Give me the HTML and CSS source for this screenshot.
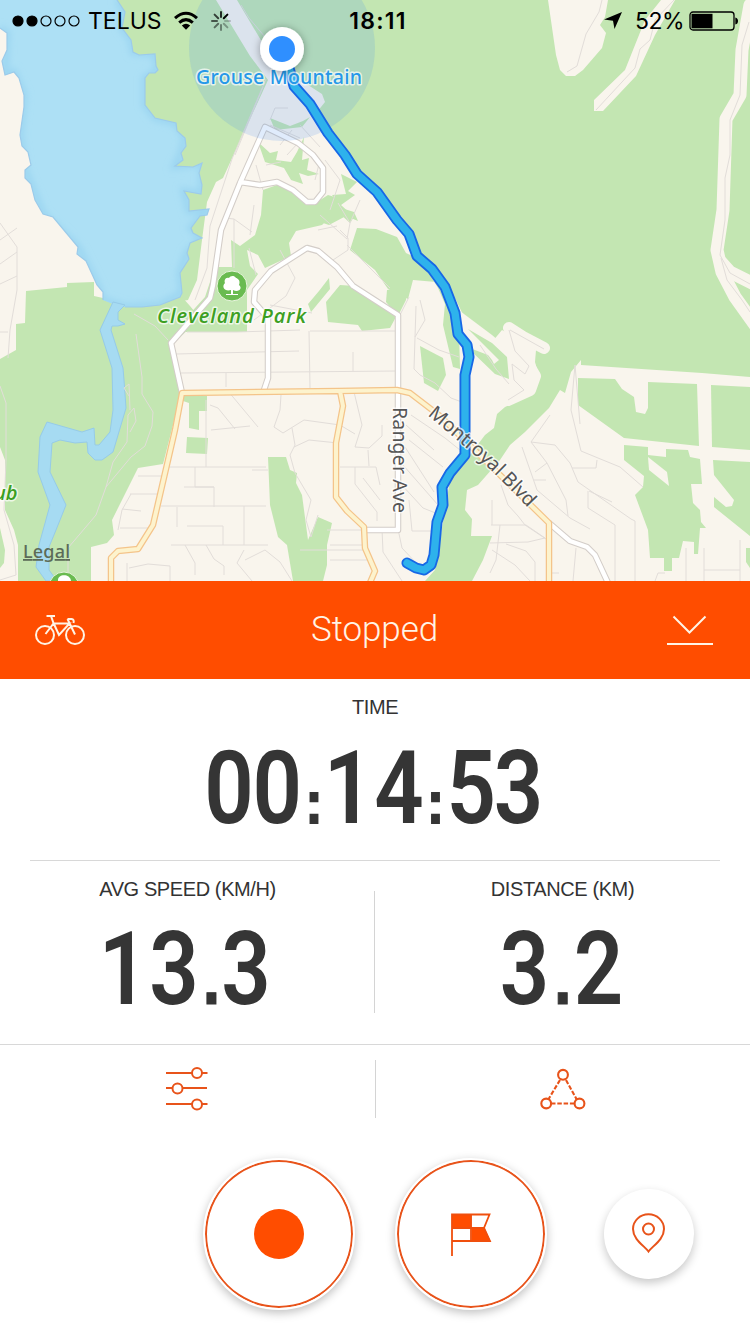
FILE: index.html
```html
<!DOCTYPE html>
<html lang="en">
<head>
<meta charset="utf-8">
<title>Ride recording</title>
<link rel="stylesheet" href="styles.css">
</head>
<body>
<main class="screen">
  <section class="map">
    <svg class="map-art" viewBox="0 0 750 581" width="750" height="581">
      <defs>
        <filter id="soft" x="-5%" y="-5%" width="110%" height="110%"><feGaussianBlur stdDeviation="3"/></filter>
        <filter id="drop" x="-50%" y="-50%" width="200%" height="200%"><feDropShadow dx="0" dy="1" stdDeviation="4" flood-opacity=".35"/></filter>
        <clipPath id="lakeClip"><path d="M0 0H117L125 12 122 28 131 40 133 52 139 55 155 54 156 66 158 70 155 73 149 73 145 78V105L155 118 176 123 177 131 185 138 186 146 181 153 183 160 175 166 193 167 202 163 199 173 202 185 201 194 184 191 189 200V211L209 209 207 215 200 216 191 228 193 233 202 238 190 243 187 253 189 259 180 273 182 293 180 297 160 305 142 307 125 307 113 304 103 300V292L97 285 86 261 77 254 78 247 53 217 43 214 35 200 31 184 25 178V170L31 165 28 152 22 146 20 135 24 107V95L19 78 14 72 5 75 2 61 7 50V33L0 28Z"/></clipPath>
      </defs>
      <rect class="land" width="750" height="581"/>

      <!-- parks and forest -->
      <g class="green">
        <path d="M110 0H216L250 56 268 80 245 130 223 178 216 182 207 202 202 240 197 280 188 300 130 310Z"/>
        <path d="M237 0H750V377L702 373 581 365V360L571 372 565 393 560 390 549 408 525 432 510 445 500 460 478 485 467 490 465 510 472 519 471 536 492 536 483 560 472 581H425L435 570 440 540 450 480 470 455 485 435 494 428 497 414 505 407 527 397 539 376 535 362 536 350 502 330 492 342 468 325 456 300 440 272 418 250 408 228 396 210 370 184 352 163 342 145 325 122 317 112 325 102 322 94 308 85 290 78 262 42Z"/>
        <path d="M26 291 67 287V283L94 282V296L103 298 113 304 142 307 182 297 190 306 200 318 172 345 182 390 163 464 138 468 112 520 114 535 107 543 91 547V581H18V545L14 530 5 510V460L0 447V359L16 350V324L25 323Z"/>
        <path d="M0 528 5 550 4 563 0 568Z"/>
        <path d="M263 190 277 185 290 190 306 205 317 202 328 195 338 198 335 212 322 225 296 231 289 243 291 256 265 268 258 255 247 250 250 266 258 274 247 290 247 332H186V318L205 297 215 267 232 267 231 240 240 246 255 235 261 215Z"/>
        <path d="M258 142 270 153 278 151 276 160 291 162 297 152 304 137 302 160 309 158 307 170 319 174 308 176 299 173 303 184 291 180 284 168 265 162Z"/>
        <path d="M270 118 290 126 303 121 310 117 302 127 275 130Z"/>
        <path d="M341 174 357 182 348 191 355 195 341 205 354 217 350 223 338 212 328 218 337 201 332 195 346 194Z"/>
        <path d="M335 206 354 212 358 221 346 216 329 225 317 221Z"/>
        <path d="M357 228 376 229 397 237 406 253 421 260 438 288 445 304 443 325 453 367 460 369 459 330 450 309 436 282 413 280 408 299 388 289 375 270 350 250Z"/>
        <path d="M326 302 340 285 355 286 370 297 397 315 390 328 362 331 358 325 328 322Z"/>
        <path d="M387 290 407 288 406 300 398 316 386 302Z"/>
        <path d="M308 304 319 291 329 278 330 289 311 312Z"/>
        <path d="M420 346 443 358 446 375 438 391 424 383Z"/>
        <path d="M268 457H286L290 470 297 473 296 483 302 495 308 540 318 517 332 523 327 545V565L323 581H293L287 545 278 537 270 505Z"/>
        <path d="M183 396H207V411H199V430L189 428V403L183 401Z"/>
        <path d="M187 437 208 438 207 454 186 453Z"/>
        <path d="M578 378 615 379 622 389 634 397 636 412 645 414 648 408V382L697 384 699 446 624 438 578 405Z"/>
        <path d="M711 385 750 387V450L712 447Z"/>
        <path d="M624 445 648 447V455L666 457V449L688 450 690 457 700 459 702 484H691L693 503 700 510 701 522 706 528H700L698 554H694V542L683 541 679 558H672V571H664V558H650L648 530 635 495 643 487 644 476 624 460Z"/>
        <path d="M713 460 750 462V536L714 507V497L726 507 732 506 734 500 714 475Z"/>
        <path d="M746 548H750V568L746 562Z"/>
      </g>
      <g class="clearing">
        <path d="M548 0H608L605 17 600 25 606 33 602 48 583 70 575 76H566L560 70 556 55Z"/>
        <path d="M661 0 645 20 625 70 594 100V111H603L636 76 655 35 675 0Z"/>
        <path d="M648 457 667 472 669 486 649 470Z"/>
        <path d="M460 311 492 335 514 354 511 378 490 374 463 355Z"/>
      </g>
      <g class="strip">
        <path d="M750 5 742 50 740 95 726 119 723 210 717 250 722 272 735 297 755 325"/>
        <path d="M721 262 730 272 754 284"/>
        <path d="M490 343 512 366M509 328 519 349 535 376 530 390 508 400M509 328 523 337 544 348" stroke-width="12"/>
        <path d="M467 350 490 363" stroke-width="9"/>
      </g>
      <path class="green" d="M468 329 492 343 507 357 509 379 495 374 467 347 488 355 492 360 494 364 499 360Z"/>

      <!-- lake and river -->
      <g clip-path="url(#lakeClip)">
        <rect class="water" width="220" height="320"/>
        <path class="lake-edge" filter="url(#soft)" d="M117 0 125 12 122 28 131 40 133 52 155 54 158 70 145 78V105L155 118 176 123 185 138 181 153 175 166 202 163 202 194 184 191 189 211 209 209 191 228 202 238 187 253 180 273 182 293 160 305 125 307 103 300 97 285 78 247 43 214 25 170 20 135 24 95 14 72 5 75 7 33 0 28"/>
      </g>
      <path class="shore" d="M117 0 125 12 122 28 131 40 133 52 139 55 155 54 156 66 158 70 155 73 149 73 145 78V105L155 118 176 123 177 131 185 138 186 146 181 153 183 160 175 166 193 167 202 163 199 173 202 185 201 194 184 191 189 200V211L209 209 207 215 200 216 191 228 193 233 202 238 190 243 187 253 189 259 180 273 182 293 180 297 160 305 142 307 125 307M103 300V292L97 285 86 261 77 254 78 247 53 217 43 214 35 200 31 184 25 178V170L31 165 28 152 22 146 20 135 24 107V95L19 78 14 72 5 75 2 61 7 50V33L0 28"/>
      <path class="river" d="M113 302 100 330 112 368 113 410 110 432 99 445H95L94 428 82 432 47 422 40 437 38 472 50 505 39 545 36 567 46 581H57L49 570V547L56 530 66 505 50 472 52 443 60 440 75 443 87 442 88 453 95 460H102L113 452 126 408 124 380 123 368 111 330 112 326H118L125 324 118 320V312L125 305Z"/>

      <!-- minor streets -->
      <g class="minor">
        <path d="M0 223 17 247V290L10 330 8 358M0 240 17 228M0 264 17 252M0 284 17 276M0 332 8 332"/>
        <path d="M0 386 6 403V460L4 510 14 545 16 575 0 580M134 314 155 326 168 340M136 334 142 377V394L153 412 152 426 145 446 131 457 106 487 96 515 68 548V581M106 487 113 462 127 442 128 415 134 408 136 421 130 432M129 396 124 388 129 384 130 410"/>
        <path d="M176 354 299 351M310 331H396M181 373 396 371M226 373V387M309 331 310 388M353 352V371M187 332 237 332 300 330"/>
        <path d="M211 430 250 426M206 400V467M165 467H266M161 506H266M228 391 258 427M210 405 218 408 235 429M195 467V487H214V507M184 487H214M177 507V527M120 528H150M187 526H223V545M171 545H268M244 506V545M130 494H157M122 509 141 511M118 530 122 510 131 494M138 476H163M185 545 195 563V575M206 545 214 559 224 566V575M127 563V581M129 568 148 564 170 566V581M244 550 237 563 252 581M252 470H268M281 395 280 410 274 427 283 433 304 420 340 425 355 434M292 428 295 445 290 455 295 473 311 500 306 520 311 537 318 515M294 447 309 440 338 443M354 392 362 425 355 447 369 448 382 436V425M368 450 369 466M340 467H376L380 485M355 467V484L377 512V521M363 478 370 487 380 500M300 550H368M330 560H371M330 545H366M327 530H362M245 560 265 550 280 562 292 581"/>
        <path d="M416 306 414 369 420 375 435 383 451 398 470 405M417 338 439 350 459 357M406 425 434 450M411 415 445 438 470 458M409 440 443 467M405 447 434 492M403 465 438 505M400 483 423 508 438 514M382 529 383 552 402 581M398 529 402 548 418 565M409 500 412 531H438"/>
        <path d="M550 415 531 442 555 445 570 463 578 482 631 519 635 521V581M531 442 547 463 566 500 568 516M522 447 537 490 570 518 590 529M535 472 547 463M534 480H546M572 468H596L597 460M580 424 575 365 571 410 581 451 598 458 620 467 643 487M589 491 612 502M588 491V508L615 525V581M501 485 508 505 518 516 525 525 546 539M491 525H526L545 538 528 542 490 543M492 525 492 500M500 525 496 560 490 573M506 544 526 551 535 562V581M492 550 515 565 530 581M576 548 573 581M655 581 658 573H665M704 548V581M686 548V581M740 540V581M704 570H740M549 573H559"/>
        <path d="M509 330 515 351 529 366 525 374 512 364 514 380 524 390 508 400M510 330 544 349M480 345 496 369 509 384"/>
        <path d="M602 0 599 12 586 34 577 66 567 72M674 0 655 20 650 40 640 49 635 68 596 110M749 22 742 45 740 95 730 120V155L725 178V220L720 255 730 273 750 284M721 258 727 280 742 300 750 312"/>
        <path d="M241 5 249 18 265 37M266 79 232 159 210 226 207 268 195 300M263 87 235 155M225 218 234 219V268M234 219 252 232M270 125 300 138M298 143 287 155M320 160 315 180M338 203 350 223 347 239 320 215M350 223 360 200M347 245 390 288M280 250 295 278 286 296 254 320M330 210 340 180 325 160M270 120 275 108H288M300 125 320 147M280 145 292 130M318 230 337 226M340 230 348 238V250L330 262M249 248 256 275M263 190 256 165M254 205 250 235M266 165 281 162M400 315 409 297M270 305 312 313M420 300 425 320 415 337"/>
      </g>

      <!-- roads -->
      <g class="road casing"><path d="M182 393 171 343 210 298 213 285 221 230 240 183 265 127 298 143 313 155 323 168V192L315 202H307L293 190 277 182 260 185 240 182M264 390 268 378V318L254 302 255 290 271 271 307 248 318 251 337 267 353 286 398 315V530H365M549 523 570 541 587 547 595 555 609 585"/></g>
      <g class="road fill"><path d="M182 393 171 343 210 298 213 285 221 230 240 183 265 127 298 143 313 155 323 168V192L315 202H307L293 190 277 182 260 185 240 182M264 390 268 378V318L254 302 255 290 271 271 307 248 318 251 337 267 353 286 398 315V530H365M549 523 570 541 587 547 595 555 609 585"/></g>
      <g class="road main-casing"><path d="M111 585V558L118 551 138 549 153 525 175 430 182 393 338 391 397 390 410 393 440 416 549 523V585M340 391 343 406 336 443V497L347 511 364 527 365 548 375 571 369 585"/></g>
      <g class="road main-fill"><path d="M111 585V558L118 551 138 549 153 525 175 430 182 393 338 391 397 390 410 393 440 416 549 523V585M340 391 343 406 336 443V497L347 511 364 527 365 548 375 571 369 585"/></g>

      <circle class="accuracy" cx="282" cy="48" r="93"/>
      <path class="track-edge" d="M289 68 294 86 310 104 328 133 345 155 357 174 377 192 397 220 409 234 417 256 432 269 445 287 455 313 458 334 467 345 469 357 465 375V455L450 473 442 487 443 505 437 522 434 555 431 565 424 570 416 568 407 563"/>
      <path class="track" d="M289 68 294 86 310 104 328 133 345 155 357 174 377 192 397 220 409 234 417 256 432 269 445 287 455 313 458 334 467 345 469 357 465 375V455L450 473 442 487 443 505 437 522 434 555 431 565 424 570 416 568 407 563"/>

      <!-- labels -->
      <g class="label">
        <text class="place" x="196" y="84" textLength="166">Grouse Mountain</text>
        <text class="park" x="157" y="323" textLength="149">Cleveland Park</text>
        <text class="park" x="-6" y="500">ub</text>
        <text class="street" transform="translate(393 407) rotate(90)" textLength="106">Ranger Ave</text>
        <path id="blvd" fill="none" stroke="none" d="M427 415Q450 434 470 451T532 512"/>
        <text class="street"><textPath href="#blvd" textLength="138">Montroyal Blvd</textPath></text>
        <text class="legal" x="23" y="558" textLength="47">Legal</text>
      </g>
      <g class="badge">
        <circle cx="232" cy="286" r="15"/>
        <path d="M231 290V294H226V295H238V294H233V290C239 293 243 288 239 285 241 280 237 278 236 278 234 275 230 276 229 278 225 277 224 281 225 283 221 287 225 292 231 290Z"/>
        <circle cx="64" cy="587" r="15"/>
        <path d="M58 581C57 574 70 573 71 581Z"/>
      </g>
      <g filter="url(#drop)"><circle cx="282" cy="49" r="22" fill="#fff"/></g>
      <circle cx="282" cy="49" r="13" fill="#2f8fff"/>
    </svg>

    <header class="status">
      <div class="status-side">
        <svg width="68" height="14" viewBox="0 0 68 14"><g stroke="#000" stroke-width="1.2" fill="none"><circle cx="6" cy="7" r="5" fill="#000"/><circle cx="20" cy="7" r="5" fill="#000"/><circle cx="34" cy="7" r="5"/><circle cx="48" cy="7" r="5"/><circle cx="62" cy="7" r="5"/></g></svg>
        <span class="carrier">TELUS</span>
        <svg class="wifi" width="26" height="20" viewBox="0 0 26 20"><g fill="none" stroke="#000" stroke-width="3"><path d="M2 7.2Q13-2.6 24 7.2M6.2 11.6Q13 5.6 19.8 11.6"/></g><path d="M8.8 14.4Q13 11 17.2 14.4L13 18.8Z"/></svg>
        <svg width="20" height="20" viewBox="0 0 20 20"><g stroke="#000" stroke-width="2" stroke-linecap="round"><path d="M10 1V6" opacity=".8"/><path d="M16.4 3.6 12.8 7.2"/><path d="M14 10H19" opacity=".2"/><path d="M16.4 16.4 12.8 12.8" opacity=".3"/><path d="M10 14V19" opacity=".4"/><path d="M3.6 16.4 7.2 12.8" opacity=".5"/><path d="M1 10H6" opacity=".6"/><path d="M3.6 3.6 7.2 7.2" opacity=".7"/></g></svg>
      </div>
      <span class="clock">18:11</span>
      <div class="status-side status-right">
        <svg class="arrow" width="18" height="18" viewBox="0 0 18 18"><path d="M18 0 10.5 17 9 8.8 0 7.4Z"/></svg>
        <span class="charge">52%</span>
        <svg width="50" height="20" viewBox="0 0 50 20"><rect x="1" y="1" width="44" height="18" rx="3" fill="none" stroke="#000" stroke-width="1.3"/><rect x="2.5" y="2.8" width="21" height="14.5"/><path d="M46.3 6.5Q49 7 49 10T46.3 13.5Z"/></svg>
      </div>
    </header>
  </section>

  <section class="state-bar">
    <svg width="50" height="32" viewBox="0 0 50 32"><g fill="none" stroke="#fff4e6" stroke-width="2"><circle cx="10" cy="21" r="9"/><circle cx="40" cy="21" r="9"/><path d="M11.500 2H20M16 2 18.500 9 24 21 34.500 9.500H18.500L10.500 20M32.500 5H36.500Q39.500 5.500 38.500 9M32.500 5 40 20.500"/></g></svg>
    <h1 class="state">Stopped</h1>
    <svg width="48" height="32" viewBox="0 0 48 32"><path d="M7.500 2.500 23.500 18.500 39.500 2.500M1 30H47" fill="none" stroke="#fff4e6" stroke-width="2"/></svg>
  </section>

  <section class="time">
    <h2 class="caption">TIME</h2>
    <svg class="digits" width="360" height="120" viewBox="0 0 360 120"><text transform="scale(.85 1)" y="96" x="40 96.8 140 180.5 240 283 325 380.5">00<tspan class="colon">:</tspan>14<tspan class="colon">:</tspan>53</text></svg>
  </section>

  <section class="pair">
    <div class="metric">
      <h2 class="caption">AVG SPEED (KM/H)</h2>
      <svg class="digits" width="200" height="120" viewBox="-10 0 200 120"><text transform="scale(.85 1)" y="96" x="30 89.5 133.5 174">13<tspan class="point">.</tspan>3</text></svg>
    </div>
    <div class="metric">
      <h2 class="caption">DISTANCE (KM)</h2>
      <svg class="digits" width="160" height="120" viewBox="-10 0 160 120"><text transform="scale(.85 1)" y="96" x="37 82 124">3<tspan class="point">.</tspan>2</text></svg>
    </div>
  </section>

  <section class="tools">
    <div class="tool">
      <svg width="44" height="46" viewBox="0 0 44 46"><g fill="#fff" stroke="#e8531a" stroke-width="2"><path d="M0 7H41.500M0 22H41M0 38H41.500"/><circle cx="31" cy="7" r="5"/><circle cx="11.500" cy="22.500" r="5"/><circle cx="31" cy="38.500" r="5"/></g></svg>
    </div>
    <div class="tool">
      <svg width="46" height="42" viewBox="0 0 46 42"><g fill="#fff" stroke="#e8531a" stroke-width="2.100"><path d="M20 12 8 32M26 12 37 32M11 35.500H34" stroke-dasharray="4.500 1.800"/><circle cx="23" cy="6.800" r="4.900"/><circle cx="6.200" cy="35.500" r="4.900"/><circle cx="39.500" cy="35.500" r="4.900"/></g></svg>
    </div>
  </section>

  <nav class="actions">
    <div class="round"><span class="record"></span></div>
    <div class="round">
      <svg width="44" height="44" viewBox="0 0 44 44"><path d="M3 2H22.500V16H3ZM22.500 16H35.500L42 30H22.500Z" fill="#ff4d00"/><path d="M3 44V2.500H40.500L35 16 41 29H3M22 2V30M3 16H35" fill="none" stroke="#f04f0d" stroke-width="1.800"/></svg>
    </div>
    <div class="round small">
      <svg width="34" height="42" viewBox="0 0 34 42"><g fill="none" stroke="#e8531a" stroke-width="2"><path d="M16.500 38.500C12.500 33 1 26.500 1 16A15.500 14.700 0 0 1 32 16C32 26.500 20.500 33 16.500 38.500Z"/><circle cx="16.500" cy="16" r="5.500"/></g></svg>
    </div>
  </nav>
</main>
</body>
</html>
```
FILE: styles.css
```css
* { box-sizing: border-box; }
body { margin: 0; background: #fff; }
.screen {
  width: 750px;
  height: 1334px;
  display: flex;
  flex-direction: column;
  overflow: hidden;
  font-family: "Liberation Sans", Arial, sans-serif;
  color: #333;
}
h1, h2 { margin: 0; font-weight: 400; }
svg { display: block; flex: none; }

.map { position: relative; height: 581px; overflow: hidden; }
.land { fill: #f9f5ed; }
.green { fill: #c3e6b2; }
.clearing { fill: #f9f5ed; }
.strip { fill: none; stroke: #f9f5ed; stroke-width: 13; stroke-linejoin: round; stroke-linecap: round; }
.water { fill: #ade0f5; }
.lake-edge { fill: none; stroke: #9cd6f1; stroke-width: 7; }
.shore { fill: none; stroke: #9ccbea; stroke-width: 1.2; }
.river { fill: #a6dbf2; stroke: #96cbe8; stroke-width: 1; }
.minor path { fill: none; stroke: #e2ddd9; stroke-width: 1; }
.road path { fill: none; stroke-linejoin: round; }
.casing { stroke: #d3cdc8; stroke-width: 6.5; }
.fill { stroke: #fff; stroke-width: 4.4; }
.main-casing { stroke: #f4c48a; stroke-width: 6.5; }
.main-fill { stroke: #fdf3cd; stroke-width: 4; }
.accuracy { fill: rgb(73, 145, 240); opacity: .17; }
.track-edge, .track { fill: none; stroke-linecap: round; stroke-linejoin: round; }
.track-edge { stroke: #1768e6; stroke-width: 11; }
.track { stroke: #2eb2ec; stroke-width: 7.4; }
.label text {
  font-family: "Noto Sans", sans-serif;
  paint-order: stroke;
  stroke: rgba(255, 255, 255, .7);
  stroke-width: 3px;
  stroke-linejoin: round;
}
.label .place { font-size: 19.5px; font-weight: 500; fill: #2698e8; }
.label .park { font-family: "Open Sans", "Noto Sans", sans-serif; font-size: 20px; font-weight: 600; font-style: italic; fill: #3c9f22; }
.label .street { font-size: 19.5px; font-weight: 400; fill: #555; }
.label .legal { font-size: 18px; font-weight: 500; fill: #5c6b58; stroke: none; text-decoration: underline; }
.badge circle { fill: #69bb50; stroke: #e8f4dd; stroke-width: 1; }
.badge path { fill: #fff; }

.status {
  position: absolute;
  inset: 0 0 auto 0;
  height: 41px;
  padding: 0 11px 0 12px;
  display: grid;
  grid-template-columns: 1fr auto 1fr;
  align-items: center;
  color: #000;
  font-family: Inter, sans-serif;
  font-size: 23px;
}
.status-side { display: flex; align-items: center; }
.status-right { justify-content: flex-end; }
.carrier { margin-left: 8px; width: 74px; white-space: nowrap; }
.wifi { margin: 0 12px 0 11px; }
.clock { font-weight: 600; font-size: 23px; letter-spacing: 1.3px; padding-left: 5px; }
.arrow { margin-right: 13px; }
.charge { margin-right: 5px; letter-spacing: -.5px; }

.state-bar {
  height: 98px;
  background: #ff4d00;
  color: #fff4e6;
  display: flex;
  align-items: center;
  justify-content: space-between;
  padding: 0 36px 0 35px;
}
.state { font-family: Roboto, sans-serif; font-weight: 300; font-size: 35px; letter-spacing: -.1px; line-height: 40px; margin-left: -2px; }

.caption { font-size: 20px; line-height: 24px; letter-spacing: -.4px; text-align: center; }
.digits { overflow: visible; }
.digits text { font-family: Roboto, sans-serif; font-weight: 600; font-size: 102px; fill: #353535; text-anchor: middle; }
.digits .colon, .digits .point { font-family: "Liberation Sans", sans-serif; font-weight: 700; stroke: #353535; }
.digits .colon { font-size: 60px; stroke-width: 2px; }
.digits .point { font-size: 76px; stroke-width: 1px; }

.time {
  height: 182px;
  margin: 0 30px;
  padding-top: 16px;
  border-bottom: 1px solid #d8d8d8;
  display: flex;
  flex-direction: column;
  align-items: center;
  gap: 8px;
}
.pair { height: 184px; display: grid; grid-template-columns: 375px 375px; border-bottom: 1px solid #d8d8d8; }
.metric { display: flex; flex-direction: column; align-items: center; gap: 7px; padding-top: 16px; }
.metric:first-child {
  background: linear-gradient(#d4d4d4, #d4d4d4) right 30px / 1px 122px no-repeat;
}
.tools { height: 88px; display: grid; grid-template-columns: 376px 374px; }
.tool { display: flex; align-items: center; justify-content: center; }
.tool:first-child { background: linear-gradient(#d4d4d4, #d4d4d4) right 15px / 1px 58px no-repeat; }
.actions { flex: 1; display: flex; align-items: center; padding: 0 0 0 203px; gap: 40px; }
.round {
  flex: none;
  width: 152px;
  height: 152px;
  border-radius: 50%;
  border: 2px solid #fff;
  background: #fff;
  box-shadow: inset 0 0 0 2px #e8531a, 0 3px 10px rgba(0, 0, 0, .25);
  display: flex;
  align-items: center;
  justify-content: center;
}
.small { width: 90px; height: 90px; margin-left: 17px; border: 0; box-shadow: 0 4px 10px rgba(0, 0, 0, .22); }
.record { width: 50px; height: 50px; border-radius: 50%; background: #ff4d00; }
```
